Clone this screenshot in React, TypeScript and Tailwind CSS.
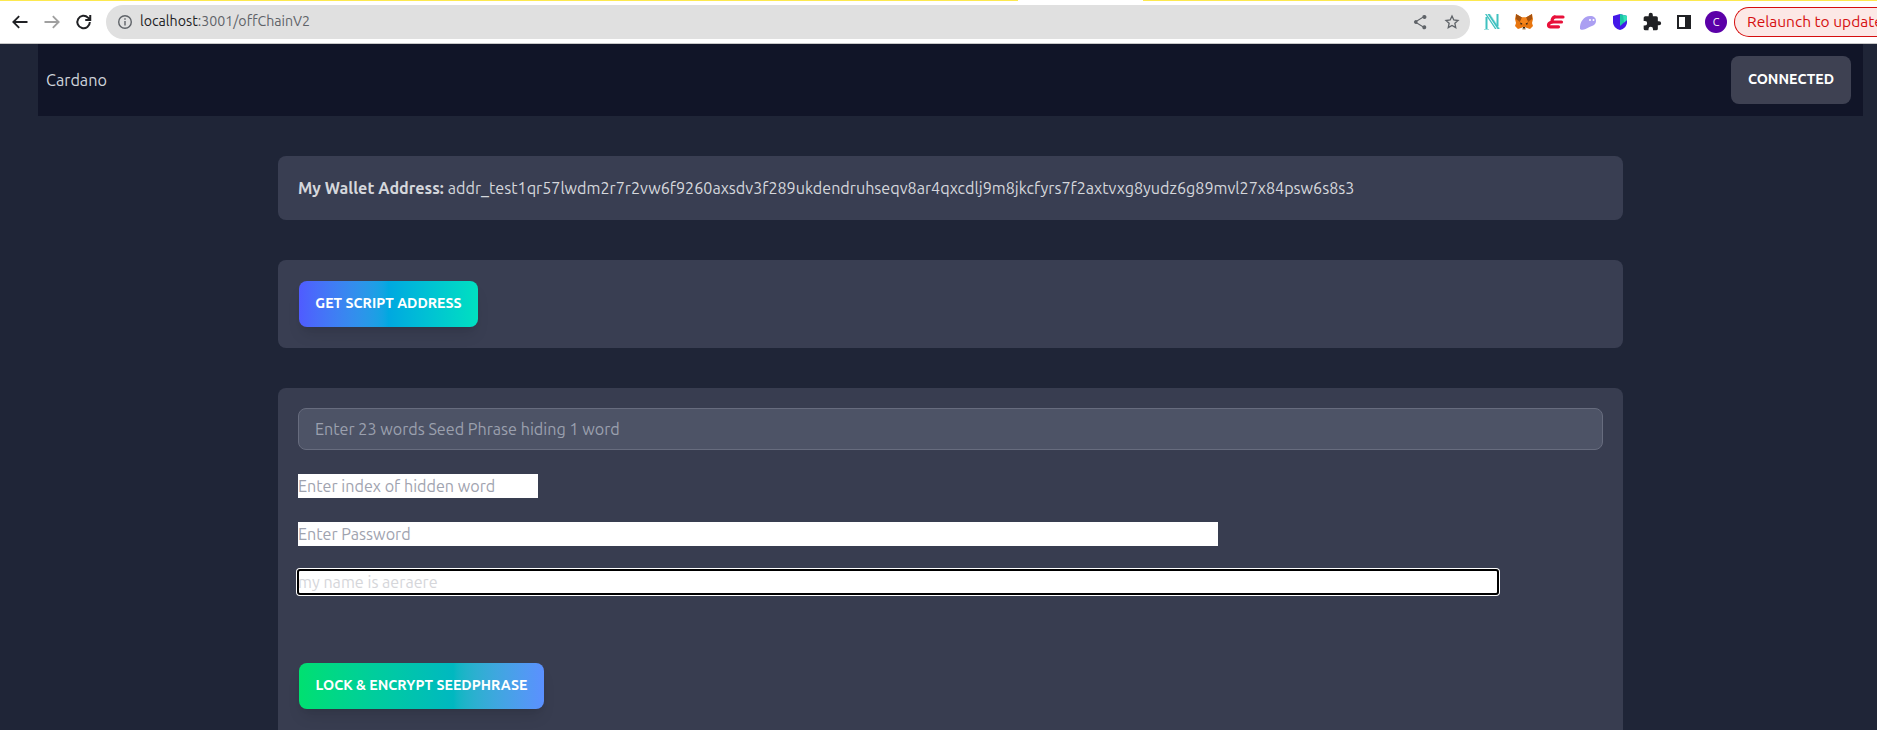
const font = "font-['Ubuntu','Noto_Sans',sans-serif]";

function Extensions() {
  return (
    <div className="flex items-center gap-[12px]">
      {/* striped N */}
      <svg width="20" height="20" viewBox="0 0 20 20" fill="none">
        <path d="M3 2h5l10 15h-5z" fill="#3fc1c0" />
        <path d="M5 2l10 15" stroke="#fff" strokeWidth="0.9" />
        <path d="M8 2l10 15" stroke="#c8eeee" strokeWidth="0.7" />
        <path d="M4.500 5v12M15.500 2v12" stroke="#3fc1c0" strokeWidth="2" />
        <path d="M2 17.500h5" stroke="#9fe0e0" strokeWidth="1" />
      </svg>
      {/* fox */}
      <svg width="20" height="20" viewBox="0 0 20 20">
        <path d="M2 2l6 3.500h4L18 2l1 5-1 4 1 3-3 3-3-1H7l-3 1-3-3 1-3-1-4z" fill="#e8760f" />
        <path d="M2 2l6 3.500L6 10 2 7zM18 2l-6 3.500 2 4.500 4-3z" fill="#a5520f" />
        <path d="M8 5.500h4l2 4.500-2 2H8l-2-2z" fill="#f6851b" />
        <path d="M6 10.500l2.500 1-1.500 1.500zM14 10.500l-2.500 1 1.500 1.500z" fill="#33261a" />
        <path d="M7.500 15h5l-1 3h-3z" fill="#d7c3ad" />
        <path d="M9 15h2v1.500H9z" fill="#33261a" />
      </svg>
      {/* red vpn mark */}
      <svg width="20" height="20" viewBox="0 0 20 20" fill="none" stroke="#e8113a" strokeWidth="3.200" strokeLinecap="round">
        <path d="M8.500 5h8.500" />
        <path d="M6 10h9.500" />
        <path d="M8.500 5c-1.500.5-2.500 2.500-2.500 5M6 10c-2 .5-3.500 1.500-3.500 3 0 1.200.8 1.800 2 1.800h8" />
      </svg>
      {/* ghost */}
      <svg width="20" height="20" viewBox="0 0 20 20">
        <path d="M2 17c-.5-7 4-13 10-13 4 0 6 2 6 5 0 4.500-5 5-7.500 6.500-2.500 1.500-6 3.500-8.500 1.500z" fill="#ab9ff2" />
        <circle cx="12" cy="8" r="1" fill="#fff" />
        <circle cx="15.500" cy="8" r="1" fill="#fff" />
      </svg>
      {/* shield */}
      <svg width="20" height="20" viewBox="0 0 20 20">
        <path d="M10 2l7 2v6c0 4-3 7-7 8-4-1-7-4-7-8V4z" fill="#4318e8" />
        <path d="M10 2l7 2v4l-7 6z" fill="#1cc6a6" />
        <path d="M13 3l4 1v4l-3 2.500z" fill="#35e0b8" />
      </svg>
      {/* puzzle */}
      <svg width="20" height="20" viewBox="0 0 24 24" fill="#202124">
        <path d="M20.500 11H19V7a2 2 0 0 0-2-2h-4V3.500a2.500 2.500 0 0 0-5 0V5H4a2 2 0 0 0-2 2v3.800h1.500a2.700 2.700 0 0 1 0 5.400H2V20a2 2 0 0 0 2 2h3.800v-1.500a2.700 2.700 0 0 1 5.400 0V22H17a2 2 0 0 0 2-2v-4h1.500a2.500 2.500 0 0 0 0-5z" />
      </svg>
      {/* side panel */}
      <div className="w-[20px] h-[20px] flex items-center justify-center">
        <div className="w-[14px] h-[14px] border-[2px] border-[#202124] border-r-[6px]" />
      </div>
    </div>
  );
}

export default function App() {
  return (
    <div className={`h-[730px] overflow-hidden bg-[#1f2537] ${font}`}>
      {/* browser chrome */}
      <div className="relative h-[44px] bg-white border-b border-[#c8c8c8] flex items-center pt-[1px]">
        <div className="absolute top-0 left-0 right-0 h-[1px] flex">
          <div className="w-[1018px] bg-[#fde94f]" />
          <div className="w-[125px] bg-white" />
          <div className="flex-1 bg-[#fde94f]" />
        </div>
        <div className="w-[106px] pl-[10px] flex items-center gap-[12px] shrink-0">
          <svg width="20" height="20" viewBox="0 0 24 24" fill="none" stroke="#202124" strokeWidth="2.200">
            <path d="M21 12H4M11 5l-7 7 7 7" />
          </svg>
          <svg width="20" height="20" viewBox="0 0 24 24" fill="none" stroke="#a0a0a0" strokeWidth="2.200">
            <path d="M3 12h17M13 5l7 7-7 7" />
          </svg>
          <svg width="20" height="20" viewBox="0 0 24 24" fill="none" stroke="#202124" strokeWidth="2.400">
            <path d="M19 12a7.500 7.500 0 1 1-2.200-5.300L19 9M19.500 3.500V9.500h-6" />
          </svg>
        </div>
        <div className="w-[1364px] h-[34px] rounded-full bg-[#e0e0e0] flex items-center pl-[11px] pr-[10px] gap-[7px] shrink-0">
          <svg width="16" height="16" viewBox="0 0 16 16" fill="none" stroke="#5f6368" strokeWidth="1.400">
            <circle cx="8" cy="8" r="6.300" />
            <path d="M8 7v4.500M8 4.300v1.400" />
          </svg>
          <span className="text-[14.200px] text-[#5f6368]">
            <span className="text-[#202124]">localhost</span>:3001/offChainV2
          </span>
          <div className="ml-auto flex items-center gap-[16px]">
            <svg width="16" height="16" viewBox="0 0 16 16" fill="#5f6368">
              <path d="M12.500 1a2 2 0 1 1-1.700 3.100L5.500 7.300a2 2 0 0 1 0 1.400l5.300 3.200a2 2 0 1 1-.5 1L5 9.700a2 2 0 1 1 0-3.400l5.300-3.200A2 2 0 0 1 12.500 1z" />
            </svg>
            <svg width="16" height="16" viewBox="0 0 24 24" fill="none" stroke="#5f6368" strokeWidth="2">
              <path d="M12 3l2.700 6 6.300.7-4.700 4.300 1.300 6.500L12 17.300 6.400 20.500l1.300-6.500L3 9.700 9.300 9z" />
            </svg>
          </div>
        </div>
        <div className="ml-[12px]">
          <Extensions />
        </div>
        <div className="ml-[11px] w-[22px] h-[22px] rounded-full bg-[#5b00a8] text-white text-[11px] flex items-center justify-center shrink-0">
          C
        </div>
        <div className="ml-[7px] pl-[12px] h-[30px] w-[200px] shrink-0 rounded-l-full border border-r-0 border-[#d50f0f] bg-[#fce8e6] text-[#d50f0f] text-[15.500px] flex items-center whitespace-nowrap">
          Relaunch to update
        </div>
      </div>

      {/* navbar */}
      <div className="ml-[38px] mr-[14px] h-[72px] bg-[#111528] flex items-center justify-between pl-[8px] pr-[12px]">
        <span className="text-[16.200px] text-[#d0d4dc]">Cardano</span>
        <button className="h-[48px] w-[120px] rounded-lg bg-[#3e4152] text-[14.200px] font-bold text-white">CONNECTED</button>
      </div>

      {/* cards */}
      <div className="w-[1345px] ml-[278px] mt-[40px] flex flex-col gap-[40px]">
        <div className="h-[64px] rounded-lg bg-[#393e52] px-[20px] flex items-center text-[16.150px] text-[#d5d7dc] whitespace-nowrap">
          <span className="font-bold mr-[4px]">My Wallet Address:</span>
          <span>addr_test1qr57lwdm2r7r2vw6f9260axsdv3f289ukdendruhseqv8ar4qxcdlj9m8jkcfyrs7f2axtvxg8yudz6g89mvl27x84psw6s8s3</span>
        </div>

        <div className="h-[88px] rounded-lg bg-[#393e52] px-[21px] flex items-center">
          <button className="h-[46px] w-[179px] rounded-lg bg-gradient-to-r from-[#4f5bff] via-[#00a8e0] via-[50%] to-[#00e0c0] text-[14.200px] font-bold text-white shadow-lg">
            GET SCRIPT ADDRESS
          </button>
        </div>

        <div className="h-[342px] rounded-t-lg bg-[#383d50] px-[20px] pt-[20px]">
          <input
            placeholder="Enter 23 words Seed Phrase hiding 1 word"
            className="w-full h-[42px] rounded-lg bg-[#4d5366] border border-[#676c7e] px-[16px] text-[16.150px] text-white placeholder:text-[#9ba0ae] outline-none block"
          />
          <input
            placeholder="Enter index of hidden word"
            className="mt-[24px] w-[240px] h-[24px] bg-white text-[16.150px] placeholder:text-[#9fa3af] outline-none block"
          />
          <input
            placeholder="Enter Password"
            className="mt-[24px] w-[920px] h-[24px] bg-white text-[16.150px] placeholder:text-[#9fa3af] outline-none block"
          />
          <input
            placeholder="my name is aeraere"
            className="mt-[24px] w-[1200px] h-[24px] bg-white text-[16.150px] placeholder:text-[#d5d6da] block rounded-[2px] outline outline-[2px] -outline-offset-1 outline-black shadow-[0_0_0_2px_#fff]"
          />
          <button className="mt-[69px] ml-[1px] block h-[46px] w-[245px] rounded-lg bg-gradient-to-r from-[#00e070] via-[#00b8c0] via-[63%] to-[#5b90ff] text-[14.200px] font-bold text-white shadow-lg">
            LOCK &amp; ENCRYPT SEEDPHRASE
          </button>
        </div>
      </div>
    </div>
  );
}
